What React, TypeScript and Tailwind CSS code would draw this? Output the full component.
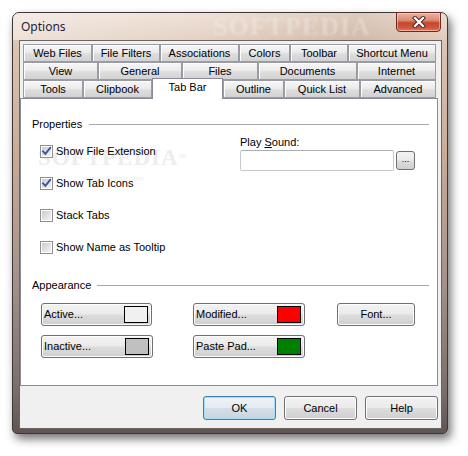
import React from "react";

const font = { fontFamily: '"Liberation Sans", Arial, sans-serif' };

function Tab({ label, w, selected = false }: { label: string; w: number; selected?: boolean }) {
  if (selected) {
    return (
      <div
        className="relative z-10 -mt-[2px] flex h-[21px] shrink-0 items-start justify-center border border-b-0 border-[#898c95] bg-white pt-[2px] text-[11px] leading-[13px] text-black"
        style={{ width: w }}
      >
        {label}
      </div>
    );
  }
  return (
    <div
      className="flex h-[18px] shrink-0 items-center justify-center border border-[#9a9ca3] bg-[linear-gradient(#f6f6f6,#ececec_45%,#dedede_55%,#d2d2d2)] text-[11px] leading-[13px] text-black shadow-[inset_1px_1px_0_#fdfdfd]"
      style={{ width: w }}
    >
      {label}
    </div>
  );
}

function Checkbox({ checked, label }: { checked: boolean; label: string }) {
  return (
    <div className="flex h-[32px] items-center">
      <div className="flex h-[13px] w-[13px] shrink-0 items-center justify-center border border-[#8e8f8f] bg-white">
        <div className="relative h-[9px] w-[9px] bg-[linear-gradient(135deg,#c9ccd1,#f3f3f3)]">
          {checked && (
            <svg className="absolute -left-[1px] -top-[1px]" width="11" height="11" viewBox="0 0 11 11">
              <path d="M2 5.3 L4.4 7.8 L9.2 1.8" stroke="#3b5699" strokeWidth="1.9" fill="none" strokeLinecap="square" />
            </svg>
          )}
        </div>
      </div>
      <span className="relative ml-[3px] text-[11px] leading-[13px] text-black">{label}</span>
    </div>
  );
}

function ColorButton({ label, color, w }: { label: string; color: string; w: number }) {
  return (
    <div
      className="flex h-[23px] items-center justify-between rounded-[3px] border border-[#707070] bg-[linear-gradient(#f2f2f2,#ebebeb_48%,#dddddd_52%,#cfcfcf)] pl-[2px] pr-[3px] shadow-[inset_0_0_0_1px_#fcfcfc]"
      style={{ width: w }}
    >
      <span className="text-[11px] leading-[13px] text-black">{label}</span>
      <div className="h-[17px] w-[24px] border border-black" style={{ backgroundColor: color }} />
    </div>
  );
}

function Button({ label, w, isDefault = false }: { label: string; w: number; isDefault?: boolean }) {
  return (
    <div
      className={
        isDefault
          ? "flex h-[24px] items-center justify-center rounded-[3px] border border-[#3c7fb1] bg-[linear-gradient(#eef3f7,#e4ebf1_48%,#d4dee7_52%,#c9d5df)] text-[11px] leading-[13px] text-black shadow-[inset_0_0_0_1px_#a8dcf8]"
          : "flex h-[24px] items-center justify-center rounded-[3px] border border-[#707070] bg-[linear-gradient(#f2f2f2,#ebebeb_48%,#dddddd_52%,#cfcfcf)] text-[11px] leading-[13px] text-black shadow-[inset_0_0_0_1px_#fcfcfc]"
      }
      style={{ width: w }}
    >
      {label}
    </div>
  );
}

export default function App() {
  return (
    <div className="h-[456px] w-[468px] overflow-hidden bg-white pl-[12px] pt-[12px]" style={font}>
      <div className="relative h-[422px] w-[436px] rounded-t-[7px] rounded-b-[5px] border border-[#3d3836] bg-[linear-gradient(#ecdcd0,#dcc3b2_8%,#c8aa96_35%,#a3908a_65%,#7a6e6a_90%,#5f5552)] shadow-[3px_5px_10px_rgba(0,0,0,0.55)]">
        {/* title bar */}
        <div className="relative flex h-[27px] items-center rounded-t-[6px] bg-[linear-gradient(90deg,rgba(255,255,255,0.45),rgba(255,255,255,0.15)_45%,rgba(120,80,60,0.12)_80%,rgba(255,255,255,0.05))] pl-[8px]">
          <span
            className="pointer-events-none absolute left-[200px] top-[2px] select-none text-[26px] font-bold leading-[24px] tracking-[1px] text-[rgba(255,255,255,0.28)] blur-[1px]"
            style={{ fontFamily: '"Liberation Serif", serif' }}
          >
            SOFTPEDIA
          </span>
          <span
            className="relative text-[12px] leading-[15px] text-[#1e1e3c]"
            style={{ fontFamily: '"Noto Sans", "Liberation Sans", sans-serif' }}
          >
            Options
          </span>
          <div className="absolute right-[6px] top-[-1px] flex h-[20px] w-[45px] items-center justify-center rounded-b-[4px] border border-[#6a2c22] bg-[linear-gradient(#eab2a4,#dc8a76_40%,#c7452c_55%,#d15a3f_85%,#e2836a)] shadow-[inset_0_0_0_1px_rgba(255,220,210,0.5)]">
            <svg width="14" height="12" viewBox="0 0 14 12">
              <path d="M3 2 L11 10 M11 2 L3 10" stroke="#4a2a28" strokeWidth="4.2" strokeLinecap="square" />
              <path d="M3 2 L11 10 M11 2 L3 10" stroke="#ffffff" strokeWidth="2.2" strokeLinecap="square" />
            </svg>
          </div>
        </div>

        {/* client area */}
        <div className="ml-[6px] h-[389px] w-[423px] border border-[#6c6460] bg-[#f0f0f0]">
          <div className="pt-[3px]">
            {/* tab rows */}
            <div className="flex pl-[3px]">
              <Tab label="Web Files" w={69} />
              <Tab label="File Filters" w={68} />
              <Tab label="Associations" w={79} />
              <Tab label="Colors" w={51} />
              <Tab label="Toolbar" w={58} />
              <Tab label="Shortcut Menu" w={88} />
            </div>
            <div className="flex pl-[3px]">
              <Tab label="View" w={75} />
              <Tab label="General" w={84} />
              <Tab label="Files" w={76} />
              <Tab label="Documents" w={99} />
              <Tab label="Internet" w={79} />
            </div>
            <div className="flex h-[18px] items-start pl-[3px]">
              <Tab label="Tools" w={60} />
              <Tab label="Clipbook" w={69} />
              <Tab label="Tab Bar" w={71} selected />
              <Tab label="Outline" w={61} />
              <Tab label="Quick List" w={76} />
              <Tab label="Advanced" w={76} />
            </div>

            {/* panel */}
            <div className="relative h-[288px] w-[418px] border border-[#898c95] bg-white pl-[11px] pr-[8px] pt-[19px]">
              <div
                className="pointer-events-none absolute left-[17px] top-[47px] select-none text-[23px] font-bold leading-[24px] tracking-[1px] text-[#ededed]"
                style={{ fontFamily: '"Liberation Serif", serif' }}
              >
                SOFTPEDIA<span className="align-top text-[8px]">™</span>
              </div>
              <div className="pointer-events-none absolute left-[62px] top-[76px] select-none text-[7px] leading-[8px] text-[#eeeeee]">
                www.softpedia.com
              </div>

              <div className="relative flex h-[13px] items-center gap-[7px]">
                <span className="text-[11px] leading-[13px] text-black">Properties</span>
                <div className="h-px flex-1 bg-[#a8a8a8]" />
              </div>
              <div className="relative mt-[4px] flex">
                <div className="w-[208px] pl-[8px]">
                  <Checkbox checked label="Show File Extension" />
                  <Checkbox checked label="Show Tab Icons" />
                  <Checkbox checked={false} label="Stack Tabs" />
                  <Checkbox checked={false} label="Show Name as Tooltip" />
                </div>
                <div className="pt-[1px]">
                  <div className="text-[11px] leading-[13px] text-black">
                    Play <span className="underline">S</span>ound:
                  </div>
                  <div className="mt-[1px] flex items-center">
                    <div className="h-[21px] w-[154px] rounded-[2px] border border-[#c7c9d0] border-t-[#abadb3] bg-white" />
                    <div className="ml-[2px] flex h-[19px] w-[19px] items-center justify-center rounded-[3px] border border-[#707070] bg-[linear-gradient(#f2f2f2,#ebebeb_48%,#dddddd_52%,#cfcfcf)] pb-[3px] text-[9px] leading-[9px] text-black">
                      ...
                    </div>
                  </div>
                </div>
              </div>

              <div className="relative mt-[16px] flex h-[13px] items-center gap-[6px]">
                <span className="text-[11px] leading-[13px] text-black">Appearance</span>
                <div className="h-px flex-1 bg-[#a8a8a8]" />
              </div>
              <div className="mt-[11px] grid grid-cols-[112px_112px_78px] gap-x-[40px] gap-y-[9px] pl-[9px]">
                <ColorButton label="Active..." color="#f0f0f0" w={111} />
                <ColorButton label="Modified..." color="#ff0000" w={112} />
                <div className="flex h-[23px] w-[78px] -translate-x-[8px] items-center justify-center rounded-[3px] border border-[#707070] bg-[linear-gradient(#f2f2f2,#ebebeb_48%,#dddddd_52%,#cfcfcf)] text-[11px] leading-[13px] text-black shadow-[inset_0_0_0_1px_#fcfcfc]">
                  Font...
                </div>
                <ColorButton label="Inactive..." color="#c0c0c0" w={112} />
                <ColorButton label="Paste Pad..." color="#008000" w={112} />
              </div>
            </div>

            {/* bottom buttons */}
            <div className="mt-[10px] flex w-[418px] justify-end gap-[8px]">
              <Button label="OK" w={73} isDefault />
              <Button label="Cancel" w={73} />
              <Button label="Help" w={73} />
            </div>
          </div>
        </div>
      </div>
    </div>
  );
}
